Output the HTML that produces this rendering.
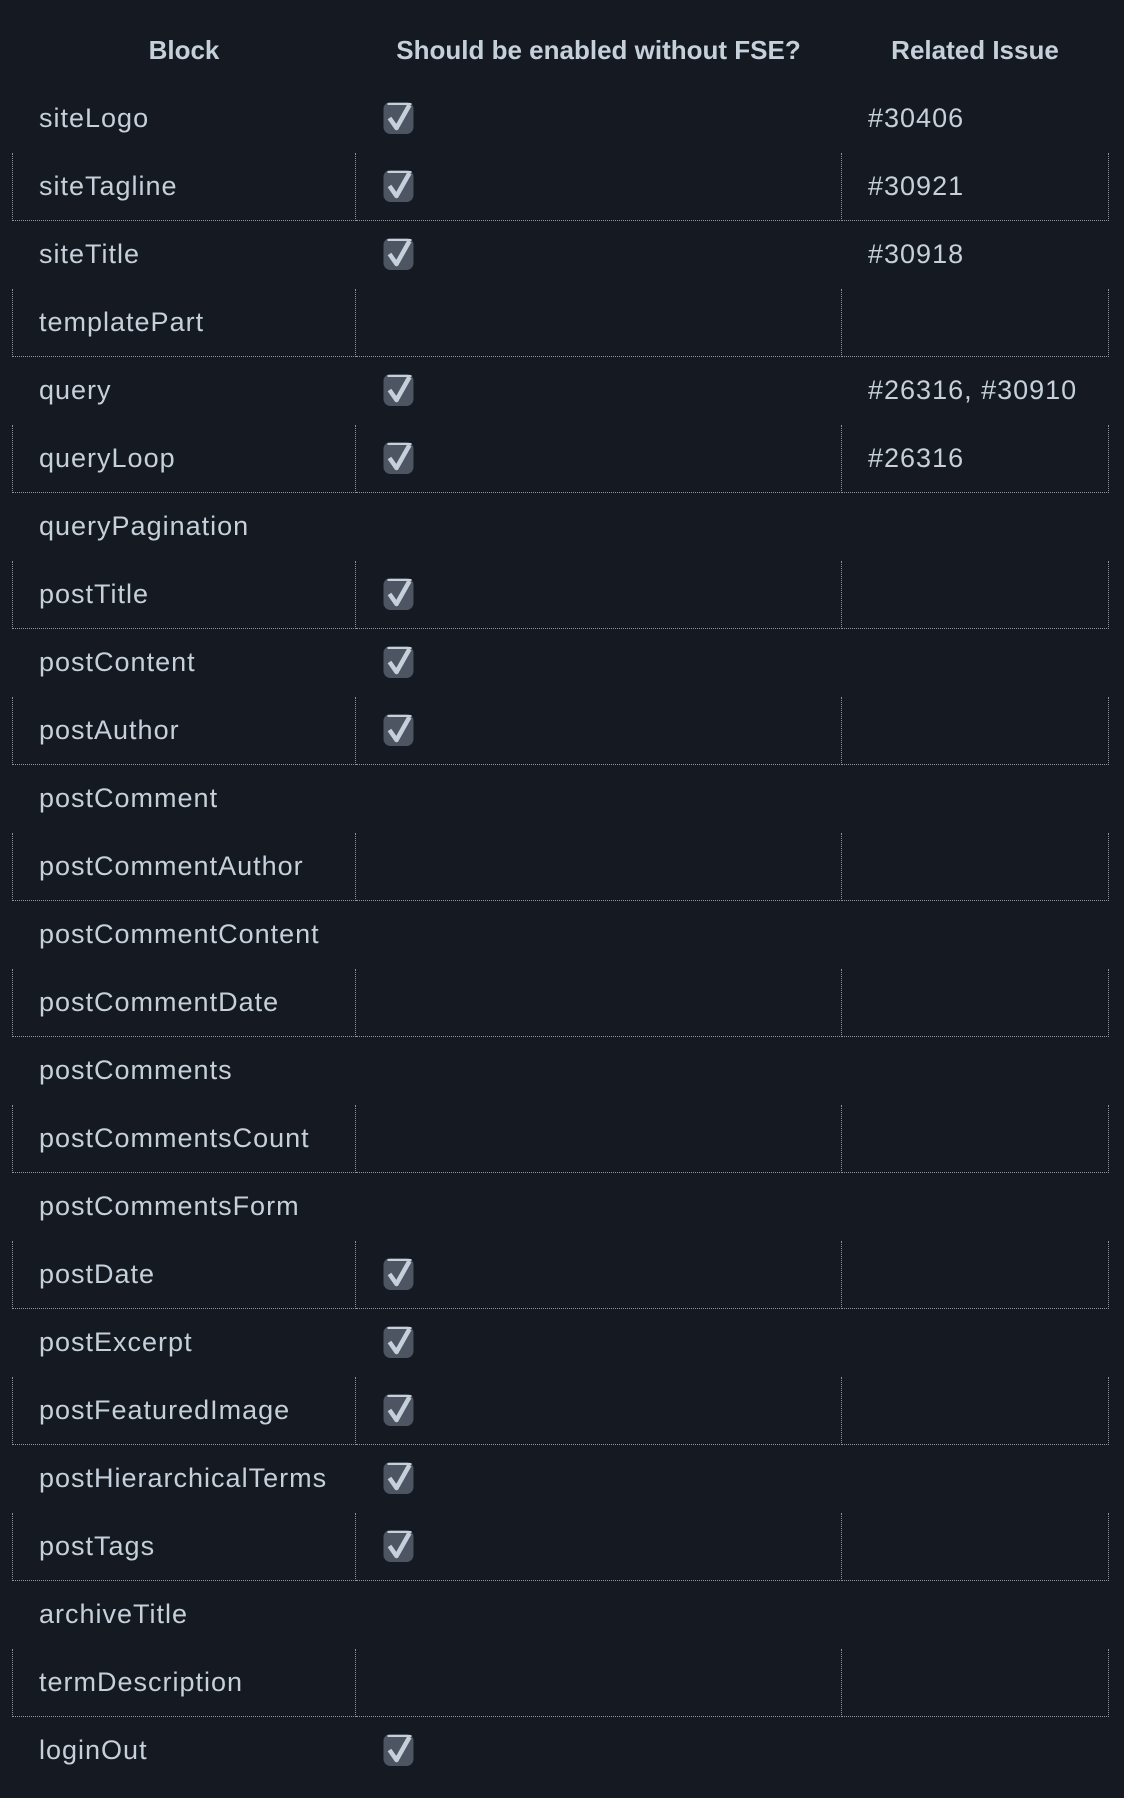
<!DOCTYPE html>
<html><head><meta charset="utf-8"><style>
html,body{margin:0;padding:0;background:#151921;width:1124px;height:1798px;overflow:hidden}
body{font-family:"Liberation Sans",sans-serif;color:#c5d0da;font-size:27px;letter-spacing:1px}
table{position:absolute;left:12px;top:16px;border-collapse:collapse;width:1096px;table-layout:fixed}
td,th{height:67px;padding:0 0 0 26px;text-align:left;vertical-align:middle;border:1px dotted transparent;white-space:nowrap}
th{font-weight:bold;text-align:center;padding:0;height:67px;font-size:26px;letter-spacing:0}
th+th{border-left:1px dotted #6b7380}
tr.e td{border:1px dotted #8b949e}
tr.e td:first-child{border-left:1px dotted #8b949e}
col.a{width:343px}col.b{width:486px}col.c{width:267px}
.cb{display:inline-block;width:33px;height:34px;vertical-align:middle;margin-top:-2px}
</style></head><body>
<svg width="0" height="0" style="position:absolute"><defs><symbol id="ck" viewBox="0 0 32 34"><rect x="1" y="1" width="30" height="32" rx="7" fill="#4d5563"/><rect x="5" y="2" width="24" height="2" fill="#c5d0da"/><path d="M7 17 L14 27 L27 4" fill="none" stroke="#c5d0da" stroke-width="4.5" stroke-linejoin="round"/></symbol></defs></svg>
<table>
<colgroup><col class="a"><col class="b"><col class="c"></colgroup>
<tr><th>Block</th><th>Should be enabled without FSE?</th><th>Related Issue</th></tr>
<tr><td>siteLogo</td><td><svg class="cb"><use href="#ck"/></svg></td><td>#30406</td></tr>
<tr class="e"><td>siteTagline</td><td><svg class="cb"><use href="#ck"/></svg></td><td>#30921</td></tr>
<tr><td>siteTitle</td><td><svg class="cb"><use href="#ck"/></svg></td><td>#30918</td></tr>
<tr class="e"><td>templatePart</td><td></td><td></td></tr>
<tr><td>query</td><td><svg class="cb"><use href="#ck"/></svg></td><td>#26316, #30910</td></tr>
<tr class="e"><td>queryLoop</td><td><svg class="cb"><use href="#ck"/></svg></td><td>#26316</td></tr>
<tr><td>queryPagination</td><td></td><td></td></tr>
<tr class="e"><td>postTitle</td><td><svg class="cb"><use href="#ck"/></svg></td><td></td></tr>
<tr><td>postContent</td><td><svg class="cb"><use href="#ck"/></svg></td><td></td></tr>
<tr class="e"><td>postAuthor</td><td><svg class="cb"><use href="#ck"/></svg></td><td></td></tr>
<tr><td>postComment</td><td></td><td></td></tr>
<tr class="e"><td>postCommentAuthor</td><td></td><td></td></tr>
<tr><td>postCommentContent</td><td></td><td></td></tr>
<tr class="e"><td>postCommentDate</td><td></td><td></td></tr>
<tr><td>postComments</td><td></td><td></td></tr>
<tr class="e"><td>postCommentsCount</td><td></td><td></td></tr>
<tr><td>postCommentsForm</td><td></td><td></td></tr>
<tr class="e"><td>postDate</td><td><svg class="cb"><use href="#ck"/></svg></td><td></td></tr>
<tr><td>postExcerpt</td><td><svg class="cb"><use href="#ck"/></svg></td><td></td></tr>
<tr class="e"><td>postFeaturedImage</td><td><svg class="cb"><use href="#ck"/></svg></td><td></td></tr>
<tr><td>postHierarchicalTerms</td><td><svg class="cb"><use href="#ck"/></svg></td><td></td></tr>
<tr class="e"><td>postTags</td><td><svg class="cb"><use href="#ck"/></svg></td><td></td></tr>
<tr><td>archiveTitle</td><td></td><td></td></tr>
<tr class="e"><td>termDescription</td><td></td><td></td></tr>
<tr><td>loginOut</td><td><svg class="cb"><use href="#ck"/></svg></td><td></td></tr>
</table>
</body></html>
